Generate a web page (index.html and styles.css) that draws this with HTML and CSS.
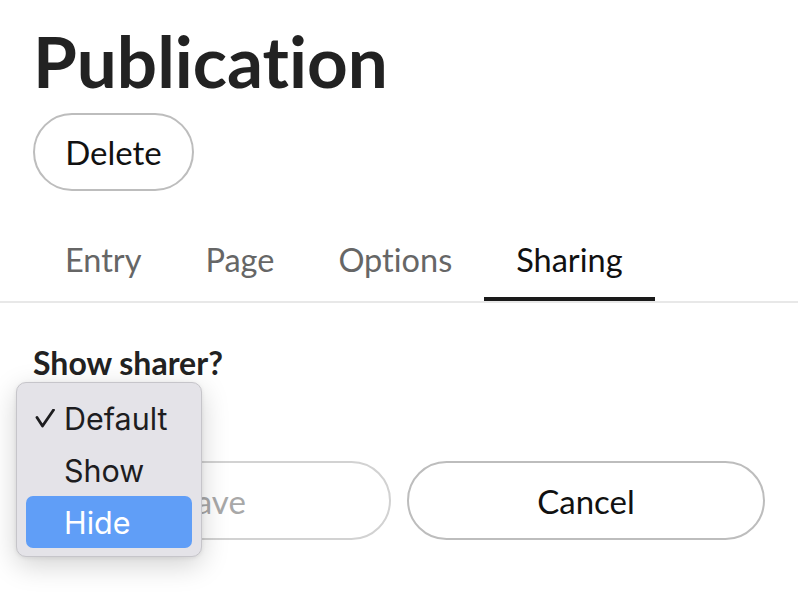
FILE: index.html
```html
<!DOCTYPE html>
<html lang="en">
<head>
<meta charset="utf-8">
<title>Publication</title>
<link rel="stylesheet" href="styles.css">
</head>
<body>
  <header class="head">
    <h1 class="title">Publication</h1>
    <button class="btn btn-delete" type="button">Delete</button>
  </header>

  <nav class="tabs">
    <a class="tab">Entry</a>
    <a class="tab">Page</a>
    <a class="tab">Options</a>
    <a class="tab tab-active">Sharing</a>
  </nav>

  <main class="panel">
    <label class="field-label">Show sharer?</label>
    <div class="select-slot"></div>
    <div class="actions">
      <button class="btn btn-save" type="button" disabled>Save</button>
      <button class="btn btn-cancel" type="button">Cancel</button>
    </div>
  </main>

  <div class="menu">
    <div class="menu-item">
      <svg class="check" width="20" height="19" viewBox="0 0 20 19"><path d="M2 8.5 L7.5 17 L18.5 1" fill="none" stroke="#1d1d1f" stroke-width="2.8" stroke-linecap="round" stroke-linejoin="round"/></svg>
      <span>Default</span>
    </div>
    <div class="menu-item"><span>Show</span></div>
    <div class="menu-item menu-item-hl"><span>Hide</span></div>
  </div>
</body>
</html>
```

FILE: styles.css
```css
html, body {
  margin: 0;
  padding: 0;
  background: #ffffff;
}

body {
  font-family: "Lato", "Liberation Sans", sans-serif;
  font-variant-ligatures: none;
  color: #222222;
  width: 798px;
  height: 600px;
  overflow: hidden;
  position: relative;
}

.head {
  padding: 15px 33px 0;
}

.title {
  margin: 0;
  font-size: 71px;
  line-height: 91px;
  font-weight: 700;
  color: #222222;
}

.btn {
  font-family: "Lato", "Liberation Sans", sans-serif;
  font-variant-ligatures: none;
  background: #ffffff;
  border: 2px solid #bdbdbd;
  border-radius: 40px;
  font-size: 33px;
  color: #111111;
  padding: 0;
  cursor: pointer;
}

.btn-delete {
  display: block;
  margin-top: 7px;
  width: 161px;
  height: 78px;
}

.tabs {
  display: flex;
  margin-top: 32px;
  padding-left: 33px;
  border-bottom: 2px solid #e8e8e8;
}

.tab {
  display: block;
  font-size: 32.5px;
  line-height: 40px;
  color: #666666;
  padding: 17px 32px 17px;
  border-bottom: 4px solid transparent;
}

.tab-active {
  color: #111111;
  border-bottom-color: #1a1a1a;
}

.panel {
  padding: 42px 33px 0;
}

.field-label {
  display: block;
  font-size: 32px;
  line-height: 36px;
  font-weight: 700;
  color: #222222;
}

.select-slot {
  height: 80px;
}

.actions {
  display: grid;
  grid-template-columns: 1fr 1fr;
  gap: 16px;
}

.actions .btn {
  height: 79px;
}

.btn-save {
  color: #a8a8a8;
  border-color: #d2d2d2;
  cursor: default;
}

.btn-cancel {
  color: #111111;
}

.menu {
  position: absolute;
  left: 16px;
  top: 382px;
  box-sizing: border-box;
  width: 186px;
  padding: 9px 9px 8px;
  background: #e4e3e8;
  border: 1px solid #c6c5ca;
  border-radius: 10px;
  box-shadow: 0 8px 28px rgba(0, 0, 0, 0.18), 0 1px 4px rgba(0, 0, 0, 0.08);
  font-family: "Inter", "Noto Sans", sans-serif;
}

.menu-item {
  position: relative;
  height: 52px;
  display: flex;
  align-items: center;
  padding-left: 38px;
  border-radius: 7px;
  font-size: 30.5px;
  color: #1d1d1f;
}

.check {
  position: absolute;
  left: 9px;
  top: 17px;
}

.menu-item-hl {
  background: #609ef7;
  color: #ffffff;
}
```
